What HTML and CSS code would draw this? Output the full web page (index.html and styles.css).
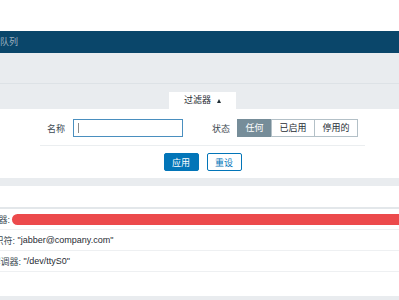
FILE: index.html
```html
<!DOCTYPE html>
<html lang="zh-CN">
<head>
  <meta charset="UTF-8">
  <title>队列</title>
  <link rel="stylesheet" href="styles.css">
</head>
<body>
  <div class="top-space"></div>
  <header class="title-bar"><span class="title">队列</span></header>
  <div class="page-head"></div>

  <div class="filter-tabs">
    <span class="tab">过滤器<span class="arrow"></span></span>
  </div>
  <div class="filter-body">
    <div class="fields">
      <span class="field-label">名称</span>
      <div class="text-input"><span class="caret"></span></div>
      <span class="field-label status-label">状态</span>
      <div class="seg">
        <span class="seg-btn active">任何</span>
        <span class="seg-btn">已启用</span>
        <span class="seg-btn">停用的</span>
      </div>
    </div>
    <div class="actions">
      <button class="btn btn-primary">应用</button>
      <button class="btn btn-alt">重设</button>
    </div>
  </div>
  <div class="band"></div>
  <div class="gap"></div>

  <div class="list">
    <div class="row row-server">
      <span class="clip">SMTP服务器:</span>
      <span class="redact"></span>
    </div>
    <div class="row row-jabber">
      <span class="clip">Jabber标识符:</span>
      <span class="value">"jabber@company.com"</span>
    </div>
    <div class="row row-modem">
      <span class="clip">GSM调制解调器:</span>
      <span class="value">"/dev/ttyS0"</span>
    </div>
  </div>
  <div class="list-end"></div>
  <div class="band bottom-band"></div>
</body>
</html>
```

FILE: styles.css
```css
body {
  margin: 0;
  width: 399px;
  height: 300px;
  overflow: hidden;
  background: #fff;
  font-family: "Liberation Sans", "Noto Sans CJK SC", sans-serif;
  font-size: 9px;
  color: #1f2c33;
}
.top-space {
  height: 31px;
}
.title-bar {
  height: 22px;
  line-height: 22px;
  background: #0a466a;
  color: #9cb1c0;
}
.page-head {
  height: 30px;
  background: #e9ecef;
  border-bottom: 1px solid #dde2e6;
}
.filter-tabs {
  height: 25px;
  background: #e9ecef;
  padding-left: 6px;
  display: flex;
  justify-content: center;
  align-items: flex-end;
}
.tab {
  width: 67px;
  height: 17px;
  line-height: 17px;
  background: #fff;
  display: flex;
  justify-content: center;
  align-items: center;
}
.arrow {
  width: 0;
  height: 0;
  margin-left: 6px;
  border-left: 2.5px solid transparent;
  border-right: 2.5px solid transparent;
  border-bottom: 4px solid #1f2c33;
}
.filter-body {
  background: #fff;
  padding: 10px 0 7px 6px;
}
.fields {
  width: 311px;
  margin: 0 auto;
  padding: 0 7px 8px;
  display: flex;
  align-items: center;
  border-bottom: 1px solid #ebeef0;
}
.field-label {
  margin-right: 8px;
  color: #3d4a52;
}
.status-label {
  margin-left: 29px;
  margin-right: 7px;
}
.text-input {
  box-sizing: border-box;
  width: 110px;
  height: 18px;
  border: 1px solid #4a8fbf;
  display: flex;
  align-items: center;
  padding-left: 4px;
}
.caret {
  width: 1px;
  height: 10px;
  background: #8a8a8a;
}
.seg {
  display: flex;
}
.seg-btn {
  box-sizing: border-box;
  height: 18px;
  line-height: 16px;
  padding: 0 7.5px;
  border: 1px solid #b3c0c7;
  background: #fff;
}
.seg-btn + .seg-btn {
  margin-left: -1px;
}
.seg-btn.active {
  background: #768d99;
  border-color: #768d99;
  color: #fff;
}
.actions {
  display: flex;
  justify-content: center;
  gap: 8px;
  padding-top: 7px;
}
.btn {
  box-sizing: border-box;
  width: 35px;
  height: 18px;
  padding: 0;
  font: inherit;
  border-radius: 2px;
  border: 1px solid #0275b8;
}
.btn-primary {
  background: #0275b8;
  color: #fff;
}
.btn-alt {
  background: #fff;
  color: #0275b8;
}
.band {
  height: 8px;
  background: #e9ecef;
}
.gap {
  height: 21px;
}
.list {
  border-top: 2px solid #e3e7ea;
}
.row {
  height: 20px;
  display: flex;
  align-items: center;
  border-bottom: 1px solid #eef0f2;
  white-space: nowrap;
}
.clip {
  flex: none;
  display: flex;
  justify-content: flex-end;
  overflow: hidden;
  color: #3d4a52;
}
.row-server .clip { width: 10px; }
.row-jabber .clip { width: 15px; }
.row-modem .clip { width: 21px; }
.value {
  margin-left: 2.5px;
}
.redact {
  flex: none;
  width: 420px;
  height: 11px;
  margin-left: 2px;
  border-radius: 6px;
  background: #ec4a4c;
}
.list-end {
  height: 24px;
}
.bottom-band {
  height: 10px;
}
```
